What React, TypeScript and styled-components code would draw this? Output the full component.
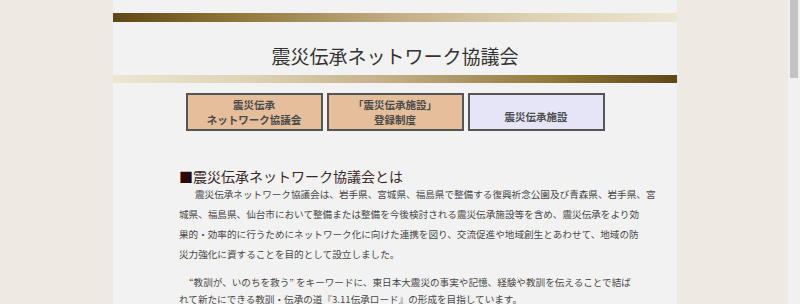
import styled, { createGlobalStyle } from 'styled-components';

const GlobalStyle = createGlobalStyle`
  html, body {
    margin: 0;
    padding: 0;
    overflow: hidden;
    background: #efe9e4;
  }
  body {
    font-family: "Noto Sans CJK JP", "Noto Sans", sans-serif;
    color: #444;
  }
`;

const Page = styled.div`
  display: flex;
  width: 800px;
  height: 304px;
  overflow: hidden;
`;

const Gutter = styled.div<{ $width?: number }>`
  flex: ${({ $width }) => ($width ? `0 0 ${$width}px` : '1')};
  background: #efe9e4;
`;

const Scrollbar = styled.div`
  flex: 0 0 12px;
  box-sizing: border-box;
  background: #f1f1f1;
  padding: 0 2px;
`;

const ScrollThumb = styled.div`
  height: 78px;
  background: #c3c3c3;
`;

const Main = styled.main`
  flex: 0 0 564px;
  background: #f3f2f2;
  padding-top: 13px;
  overflow: hidden;
`;

const Bar = styled.div<{ $reverse?: boolean }>`
  height: ${({ $reverse }) => ($reverse ? 8 : 9)}px;
  background: linear-gradient(
    ${({ $reverse }) => ($reverse ? 'to left' : 'to right')},
    #5e4716 0%,
    #8a7434 20%,
    #c2ad85 50%,
    #ddd2b5 75%,
    #ece6d3 100%
  );
`;

const Title = styled.h1`
  margin: 0;
  padding: 24px 0 10px;
  text-align: center;
  font-size: 19px;
  line-height: 19px;
  font-weight: normal;
  color: #333;
`;

const NavRow = styled.nav`
  display: flex;
  justify-content: center;
  gap: 4px;
  margin-top: 10px;
`;

const NavButton = styled.div<{ $active?: boolean; $low?: boolean }>`
  box-sizing: border-box;
  width: 137px;
  height: 38px;
  border: 2px solid #555;
  background: ${({ $active }) => ($active ? '#e5e5f7' : '#e5be9b')};
  display: flex;
  flex-direction: column;
  align-items: center;
  justify-content: ${({ $low }) => ($low ? 'flex-end' : 'center')};
  padding-bottom: ${({ $low }) => ($low ? '5px' : '0')};
  font-size: 10.5px;
  line-height: 15px;
  font-weight: bold;
  color: #4a4a4a;
  text-align: center;
`;

const Section = styled.section`
  padding: 37px 0 0 66px;
`;

const Heading = styled.h2`
  margin: 0;
  font-size: 14px;
  line-height: 16px;
  font-weight: normal;
  color: #3a2828;

  &::before {
    content: '■';
    color: #2a0808;
  }
`;

const Para = styled.p<{ $indent: number }>`
  margin: 0;
  font-size: 9.6px;
  line-height: 20px;
  white-space: nowrap;
  text-indent: ${({ $indent }) => $indent}px;
  color: #474747;

  & + & {
    margin-top: 10px;
    line-height: 17px;
  }
`;

export default function App() {
  return (
    <>
      <GlobalStyle />
      <Page>
        <Gutter $width={113} />
        <Main>
          <Bar />
          <Title>震災伝承ネットワーク協議会</Title>
          <Bar $reverse />
          <NavRow>
            <NavButton>
              <span>震災伝承</span>
              <span>ネットワーク協議会</span>
            </NavButton>
            <NavButton>
              <span>「震災伝承施設」</span>
              <span>登録制度</span>
            </NavButton>
            <NavButton $active $low>
              <span>震災伝承施設</span>
            </NavButton>
          </NavRow>
          <Section>
            <Heading>震災伝承ネットワーク協議会とは</Heading>
            <Para $indent={16}>
              震災伝承ネットワーク協議会は、岩手県、宮城県、福島県で整備する復興祈念公園及び青森県、岩手県、宮
              <br />
              城県、福島県、仙台市において整備または整備を今後検討される震災伝承施設等を含め、震災伝承をより効
              <br />
              果的・効率的に行うためにネットワーク化に向けた連携を図り、交流促進や地域創生とあわせて、地域の防
              <br />
              災力強化に資することを目的として設立しました。
            </Para>
            <Para $indent={10}>
              “教訓が、いのちを救う” をキーワードに、東日本大震災の事実や記憶、経験や教訓を伝えることで結ば
              <br />
              れて新たにできる教訓・伝承の道『3.11伝承ロード』の形成を目指しています。
            </Para>
          </Section>
        </Main>
        <Gutter />
        <Scrollbar>
          <ScrollThumb />
        </Scrollbar>
      </Page>
    </>
  );
}
